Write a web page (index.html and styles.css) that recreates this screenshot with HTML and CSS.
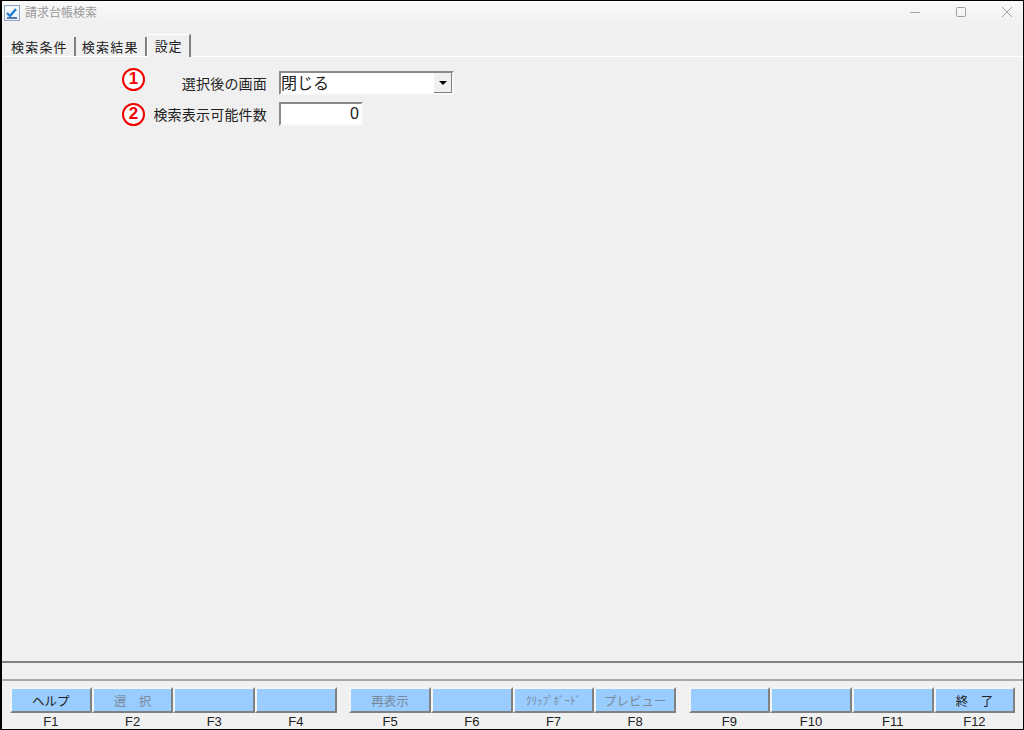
FILE: index.html
```html
<!DOCTYPE html>
<html lang="ja">
<head>
  <meta charset="UTF-8" />
  <title>請求台帳検索</title>
  <link rel="stylesheet" href="styles.css">
</head>
<body>
  <div class="window">
    <div class="titlebar">
      <svg class="app-icon" width="16" height="16" viewBox="0 0 16 16">
        <rect x="0.5" y="0.5" width="15" height="15" fill="#eef3f9" stroke="#8fa6c4" />
        <rect x="2" y="2" width="12" height="3" fill="#fff" />
        <path d="M3 8 L6 11 L12 4" fill="none" stroke="#1f7fd0" stroke-width="2.4" />
        <path d="M3 13 H13" stroke="#2f5f9f" stroke-width="1.6" />
      </svg>
      <span class="title">請求台帳検索</span>
      <div class="controls">
        <svg width="12" height="12" viewBox="0 0 12 12"><path d="M1 6.5 H11" stroke="#a8a8a8" /></svg>
        <svg width="12" height="12" viewBox="0 0 12 12"><rect x="1.5" y="1.5" width="9" height="9" rx="1" fill="none" stroke="#a0a0a0" /></svg>
        <svg width="12" height="12" viewBox="0 0 12 12"><path d="M1 1 L11 11 M11 1 L1 11" stroke="#a0a0a0" /></svg>
      </div>
    </div>

    <div class="tabs">
      <div class="tab">検索条件</div>
      <div class="tab">検索結果</div>
      <div class="tab active">設定</div>
    </div>

    <div class="content">
      <div class="form-row row-select">
        <span class="mark">1</span>
        <label class="label">選択後の画面</label>
        <div class="select">
          <span class="select-value">閉じる</span>
          <span class="select-btn"><i class="arrow"></i></span>
        </div>
      </div>
      <div class="form-row">
        <span class="mark">2</span>
        <label class="label">検索表示可能件数</label>
        <div class="number">0</div>
      </div>
    </div>

    <div class="status"></div>

    <div class="fkeys">
      <div class="group">
        <div class="fkey"><button>ヘルプ</button><span>F1</span></div>
        <div class="fkey"><button class="off">選　択</button><span>F2</span></div>
        <div class="fkey"><button></button><span>F3</span></div>
        <div class="fkey"><button></button><span>F4</span></div>
      </div>
      <div class="group">
        <div class="fkey"><button class="off">再表示</button><span>F5</span></div>
        <div class="fkey"><button></button><span>F6</span></div>
        <div class="fkey"><button class="off small">ｸﾘｯﾌﾟﾎﾞｰﾄﾞ</button><span>F7</span></div>
        <div class="fkey"><button class="off">プレビュー</button><span>F8</span></div>
      </div>
      <div class="group">
        <div class="fkey"><button></button><span>F9</span></div>
        <div class="fkey"><button></button><span>F10</span></div>
        <div class="fkey"><button></button><span>F11</span></div>
        <div class="fkey"><button>終　了</button><span>F12</span></div>
      </div>
    </div>
  </div>
</body>
</html>
```

FILE: styles.css
```css
body {
  margin: 0;
  font-family: "Noto Sans CJK JP", "Liberation Sans", sans-serif;
  color: #222;
  background: #f0f0f0;
  overflow: hidden;
}

.window {
  box-sizing: border-box;
  width: 1024px;
  height: 730px;
  border: 1px solid #000;
  border-width: 1px 1px 1px 2px;
  display: flex;
  flex-direction: column;
  background: #f0f0f0;
}

.titlebar {
  height: 24px;
  display: flex;
  align-items: center;
  padding-left: 2px;
  background: linear-gradient(#fafafa, #f0f0f0);
}

.app-icon {
  margin-right: 5px;
}

.title {
  font-size: 12px;
  color: #9a9a9a;
  margin-bottom: 3px;
}

.controls {
  margin-left: auto;
  margin-bottom: 3px;
  display: flex;
  gap: 34px;
  padding-right: 10px;
}

.tabs {
  height: 32px;
  box-sizing: border-box;
  padding: 12px 0 0 2px;
  display: flex;
  align-items: flex-end;
  border-bottom: 1px solid #fff;
}

.tab {
  height: 19px;
  line-height: 19px;
  font-size: 13px;
  padding: 0 6px 0 7px;
  letter-spacing: 1.2px;
  border-right: 2px solid #808080;
  background: #f0f0f0;
}

.tab:nth-child(2) {
  padding: 0 6px 0 6px;
}

.tab.active {
  height: 22px;
  line-height: 21px;
  margin-bottom: -1px;
  padding: 0 7px 0 7px;
  letter-spacing: 0.8px;
  border-top: 1px solid #fff;
  border-left: 1px solid #fff;
}

.content {
  flex: 1;
  padding-top: 14px;
}

.form-row {
  display: flex;
  align-items: center;
  height: 24px;
  margin-bottom: 7px;
}

.mark {
  box-sizing: border-box;
  width: 23px;
  height: 23px;
  margin-left: 120px;
  margin-right: 1px;
  border: 2.5px solid #f00000;
  border-radius: 50%;
  background: #fff;
  color: #f00000;
  font-family: "Liberation Sans", sans-serif;
  font-size: 17px;
  font-weight: bold;
  line-height: 18px;
  text-align: center;
}

.row-select .mark {
  margin-top: -8px;
}

.label {
  width: 121px;
  margin-right: 12px;
  font-size: 14px;
  letter-spacing: 0.2px;
  text-align: right;
  white-space: nowrap;
}

.select {
  box-sizing: border-box;
  width: 175px;
  height: 24px;
  display: flex;
  justify-content: space-between;
  background: #fff;
  border: 2px solid;
  border-color: #8a8a8a #f8f8f8 #f8f8f8 #8a8a8a;
}

.select-value {
  font-size: 16px;
  line-height: 19px;
}

.select-btn {
  width: 17px;
  display: flex;
  align-items: center;
  justify-content: center;
  background: #f0f0f0;
  border-right: 1px solid #808080;
  border-bottom: 1px solid #808080;
}

.arrow {
  width: 0;
  height: 0;
  border: 4px solid transparent;
  border-top-color: #000;
  border-bottom-width: 0;
}

.number {
  box-sizing: border-box;
  width: 84px;
  height: 24px;
  padding-right: 2px;
  font-family: "Liberation Sans Narrow", "Liberation Sans", sans-serif;
  font-size: 16px;
  line-height: 20px;
  text-align: right;
  background: #fff;
  border: 2px solid;
  border-color: #8a8a8a #f8f8f8 #f8f8f8 #8a8a8a;
}

.status {
  height: 16px;
  margin-top: -1px;
  border-top: 2px solid #808080;
  border-bottom: 2px solid #a8a8a8;
}

.fkeys {
  height: 48px;
  box-sizing: border-box;
  display: flex;
  gap: 12.5px;
  padding: 6px 0 0 8px;
}

.group {
  display: flex;
}

.fkey {
  width: 81.7px;
  display: flex;
  flex-direction: column;
  align-items: center;
}

.fkey button {
  box-sizing: border-box;
  width: 100%;
  height: 26px;
  padding: 0;
  font-family: inherit;
  font-size: 12.5px;
  color: #222;
  background: #99ccff;
  border: 2px solid;
  border-color: #f4f4f4 #808080 #808080 #f4f4f4;
}

.fkey button.off {
  color: #7a8a9a;
}

.fkey button.small {
  font-size: 11px;
}

.fkey span {
  font-family: "Liberation Sans Narrow", "Liberation Sans", sans-serif;
  font-size: 13px;
  line-height: 15px;
  margin-top: 1px;
}
```
